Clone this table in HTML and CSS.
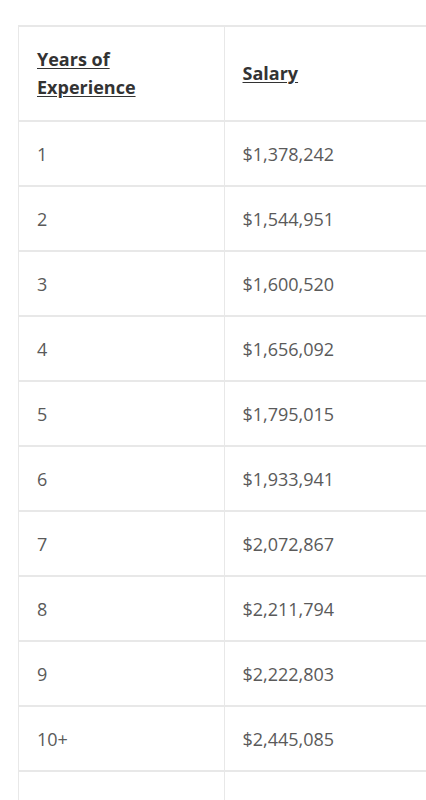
FILE: index.html
```html
<!DOCTYPE html>
<html>
<head>
<meta charset="utf-8">
<link rel="stylesheet" href="styles.css">
</head>
<body>
<div class="wrap">
<table class="salary">
<thead>
<tr><th><a href="#">Years of Experience</a></th><th><a href="#">Salary</a></th></tr>
</thead>
<tbody>
<tr><td>1</td><td>$1,378,242</td></tr>
<tr><td>2</td><td>$1,544,951</td></tr>
<tr><td>3</td><td>$1,600,520</td></tr>
<tr><td>4</td><td>$1,656,092</td></tr>
<tr><td>5</td><td>$1,795,015</td></tr>
<tr><td>6</td><td>$1,933,941</td></tr>
<tr><td>7</td><td>$2,072,867</td></tr>
<tr><td>8</td><td>$2,211,794</td></tr>
<tr><td>9</td><td>$2,222,803</td></tr>
<tr><td>10+</td><td>$2,445,085</td></tr>
<tr><td>&nbsp;</td><td>&nbsp;</td></tr>
</tbody>
</table>
</div>
</body>
</html>
```
FILE: styles.css
```css
html, body {
  margin: 0;
  padding: 0;
  background: #fff;
}
body {
  font-family: "Open Sans", sans-serif;
  font-size: 18px;
  line-height: 28px;
  color: #5a5a5a;
  height: 800px;
  overflow: hidden;
}
.wrap {
  margin: 25px 0 0 18px;
  width: 408px;
  overflow: hidden;
}
.salary {
  border-collapse: collapse;
  width: 412px;
  table-layout: fixed;
  border: 1px solid #e8e8e8;
}
.salary th, .salary td {
  border: 1px solid #e8e8e8;
  border-width: 2px 1px;
  padding: 17.5px 18px;
  text-align: left;
  vertical-align: middle;
}
.salary th {
  font-weight: 700;
  padding: 18px 18px 19px;
}
.salary th a {
  color: #333;
  text-decoration: underline;
  text-underline-offset: 2px;
  display: inline-block;
  width: 120px;
}
```
